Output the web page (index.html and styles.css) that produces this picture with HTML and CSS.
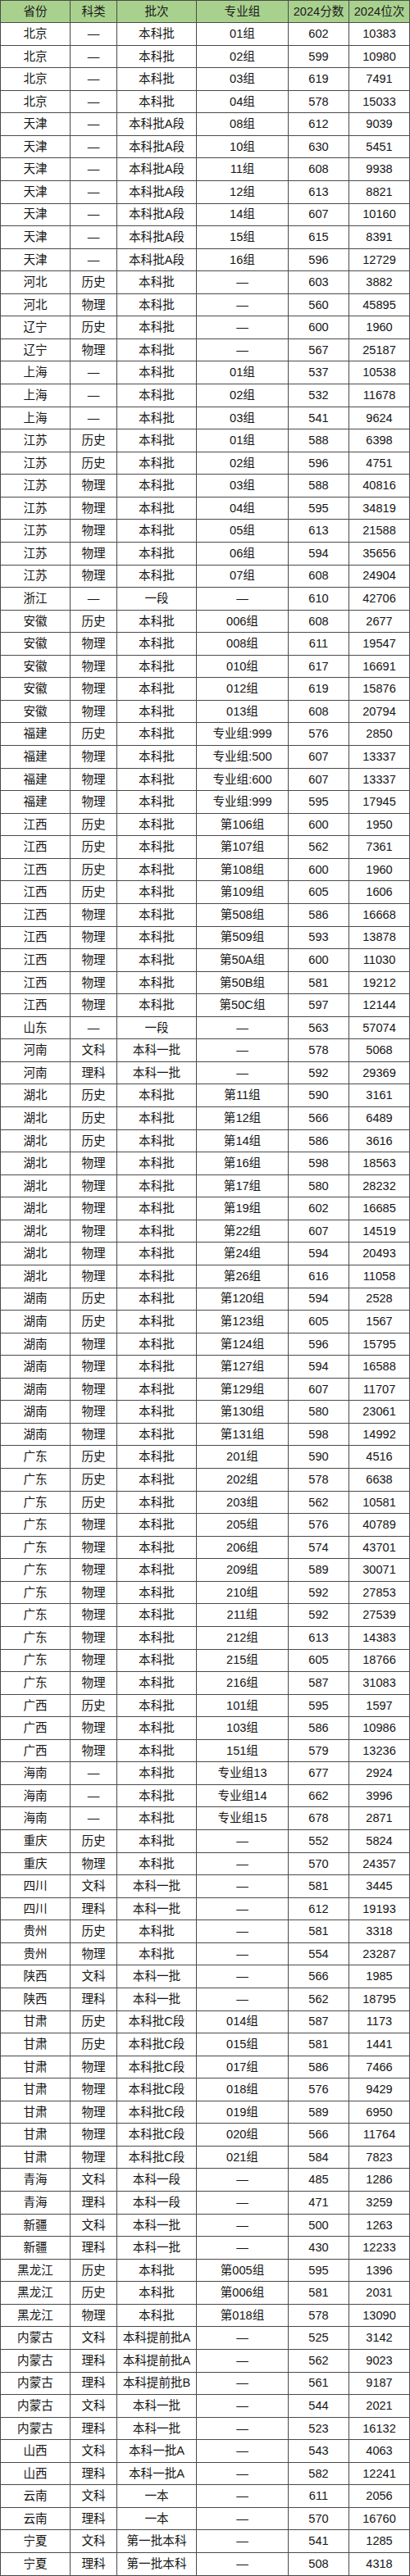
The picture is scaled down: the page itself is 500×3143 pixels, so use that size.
FILE: index.html
```html
<!DOCTYPE html>
<html lang="zh-CN">
<head>
<meta charset="utf-8">
<title>2024 分数线</title>
<link rel="stylesheet" href="styles.css">
</head>
<body>
<table class="scores">
<thead>
<tr><th>省份</th><th>科类</th><th>批次</th><th>专业组</th><th>2024分数</th><th>2024位次</th></tr>
</thead>
<tbody>
<tr><td>北京</td><td>—</td><td>本科批</td><td>01组</td><td>602</td><td>10383</td></tr>
<tr><td>北京</td><td>—</td><td>本科批</td><td>02组</td><td>599</td><td>10980</td></tr>
<tr><td>北京</td><td>—</td><td>本科批</td><td>03组</td><td>619</td><td>7491</td></tr>
<tr><td>北京</td><td>—</td><td>本科批</td><td>04组</td><td>578</td><td>15033</td></tr>
<tr><td>天津</td><td>—</td><td>本科批A段</td><td>08组</td><td>612</td><td>9039</td></tr>
<tr><td>天津</td><td>—</td><td>本科批A段</td><td>10组</td><td>630</td><td>5451</td></tr>
<tr><td>天津</td><td>—</td><td>本科批A段</td><td>11组</td><td>608</td><td>9938</td></tr>
<tr><td>天津</td><td>—</td><td>本科批A段</td><td>12组</td><td>613</td><td>8821</td></tr>
<tr><td>天津</td><td>—</td><td>本科批A段</td><td>14组</td><td>607</td><td>10160</td></tr>
<tr><td>天津</td><td>—</td><td>本科批A段</td><td>15组</td><td>615</td><td>8391</td></tr>
<tr><td>天津</td><td>—</td><td>本科批A段</td><td>16组</td><td>596</td><td>12729</td></tr>
<tr><td>河北</td><td>历史</td><td>本科批</td><td>—</td><td>603</td><td>3882</td></tr>
<tr><td>河北</td><td>物理</td><td>本科批</td><td>—</td><td>560</td><td>45895</td></tr>
<tr><td>辽宁</td><td>历史</td><td>本科批</td><td>—</td><td>600</td><td>1960</td></tr>
<tr><td>辽宁</td><td>物理</td><td>本科批</td><td>—</td><td>567</td><td>25187</td></tr>
<tr><td>上海</td><td>—</td><td>本科批</td><td>01组</td><td>537</td><td>10538</td></tr>
<tr><td>上海</td><td>—</td><td>本科批</td><td>02组</td><td>532</td><td>11678</td></tr>
<tr><td>上海</td><td>—</td><td>本科批</td><td>03组</td><td>541</td><td>9624</td></tr>
<tr><td>江苏</td><td>历史</td><td>本科批</td><td>01组</td><td>588</td><td>6398</td></tr>
<tr><td>江苏</td><td>历史</td><td>本科批</td><td>02组</td><td>596</td><td>4751</td></tr>
<tr><td>江苏</td><td>物理</td><td>本科批</td><td>03组</td><td>588</td><td>40816</td></tr>
<tr><td>江苏</td><td>物理</td><td>本科批</td><td>04组</td><td>595</td><td>34819</td></tr>
<tr><td>江苏</td><td>物理</td><td>本科批</td><td>05组</td><td>613</td><td>21588</td></tr>
<tr><td>江苏</td><td>物理</td><td>本科批</td><td>06组</td><td>594</td><td>35656</td></tr>
<tr><td>江苏</td><td>物理</td><td>本科批</td><td>07组</td><td>608</td><td>24904</td></tr>
<tr><td>浙江</td><td>—</td><td>一段</td><td>—</td><td>610</td><td>42706</td></tr>
<tr><td>安徽</td><td>历史</td><td>本科批</td><td>006组</td><td>608</td><td>2677</td></tr>
<tr><td>安徽</td><td>物理</td><td>本科批</td><td>008组</td><td>611</td><td>19547</td></tr>
<tr><td>安徽</td><td>物理</td><td>本科批</td><td>010组</td><td>617</td><td>16691</td></tr>
<tr><td>安徽</td><td>物理</td><td>本科批</td><td>012组</td><td>619</td><td>15876</td></tr>
<tr><td>安徽</td><td>物理</td><td>本科批</td><td>013组</td><td>608</td><td>20794</td></tr>
<tr><td>福建</td><td>历史</td><td>本科批</td><td>专业组:999</td><td>576</td><td>2850</td></tr>
<tr><td>福建</td><td>物理</td><td>本科批</td><td>专业组:500</td><td>607</td><td>13337</td></tr>
<tr><td>福建</td><td>物理</td><td>本科批</td><td>专业组:600</td><td>607</td><td>13337</td></tr>
<tr><td>福建</td><td>物理</td><td>本科批</td><td>专业组:999</td><td>595</td><td>17945</td></tr>
<tr><td>江西</td><td>历史</td><td>本科批</td><td>第106组</td><td>600</td><td>1950</td></tr>
<tr><td>江西</td><td>历史</td><td>本科批</td><td>第107组</td><td>562</td><td>7361</td></tr>
<tr><td>江西</td><td>历史</td><td>本科批</td><td>第108组</td><td>600</td><td>1960</td></tr>
<tr><td>江西</td><td>历史</td><td>本科批</td><td>第109组</td><td>605</td><td>1606</td></tr>
<tr><td>江西</td><td>物理</td><td>本科批</td><td>第508组</td><td>586</td><td>16668</td></tr>
<tr><td>江西</td><td>物理</td><td>本科批</td><td>第509组</td><td>593</td><td>13878</td></tr>
<tr><td>江西</td><td>物理</td><td>本科批</td><td>第50A组</td><td>600</td><td>11030</td></tr>
<tr><td>江西</td><td>物理</td><td>本科批</td><td>第50B组</td><td>581</td><td>19212</td></tr>
<tr><td>江西</td><td>物理</td><td>本科批</td><td>第50C组</td><td>597</td><td>12144</td></tr>
<tr><td>山东</td><td>—</td><td>一段</td><td>—</td><td>563</td><td>57074</td></tr>
<tr><td>河南</td><td>文科</td><td>本科一批</td><td>—</td><td>578</td><td>5068</td></tr>
<tr><td>河南</td><td>理科</td><td>本科一批</td><td>—</td><td>592</td><td>29369</td></tr>
<tr><td>湖北</td><td>历史</td><td>本科批</td><td>第11组</td><td>590</td><td>3161</td></tr>
<tr><td>湖北</td><td>历史</td><td>本科批</td><td>第12组</td><td>566</td><td>6489</td></tr>
<tr><td>湖北</td><td>历史</td><td>本科批</td><td>第14组</td><td>586</td><td>3616</td></tr>
<tr><td>湖北</td><td>物理</td><td>本科批</td><td>第16组</td><td>598</td><td>18563</td></tr>
<tr><td>湖北</td><td>物理</td><td>本科批</td><td>第17组</td><td>580</td><td>28232</td></tr>
<tr><td>湖北</td><td>物理</td><td>本科批</td><td>第19组</td><td>602</td><td>16685</td></tr>
<tr><td>湖北</td><td>物理</td><td>本科批</td><td>第22组</td><td>607</td><td>14519</td></tr>
<tr><td>湖北</td><td>物理</td><td>本科批</td><td>第24组</td><td>594</td><td>20493</td></tr>
<tr><td>湖北</td><td>物理</td><td>本科批</td><td>第26组</td><td>616</td><td>11058</td></tr>
<tr><td>湖南</td><td>历史</td><td>本科批</td><td>第120组</td><td>594</td><td>2528</td></tr>
<tr><td>湖南</td><td>历史</td><td>本科批</td><td>第123组</td><td>605</td><td>1567</td></tr>
<tr><td>湖南</td><td>物理</td><td>本科批</td><td>第124组</td><td>596</td><td>15795</td></tr>
<tr><td>湖南</td><td>物理</td><td>本科批</td><td>第127组</td><td>594</td><td>16588</td></tr>
<tr><td>湖南</td><td>物理</td><td>本科批</td><td>第129组</td><td>607</td><td>11707</td></tr>
<tr><td>湖南</td><td>物理</td><td>本科批</td><td>第130组</td><td>580</td><td>23061</td></tr>
<tr><td>湖南</td><td>物理</td><td>本科批</td><td>第131组</td><td>598</td><td>14992</td></tr>
<tr><td>广东</td><td>历史</td><td>本科批</td><td>201组</td><td>590</td><td>4516</td></tr>
<tr><td>广东</td><td>历史</td><td>本科批</td><td>202组</td><td>578</td><td>6638</td></tr>
<tr><td>广东</td><td>历史</td><td>本科批</td><td>203组</td><td>562</td><td>10581</td></tr>
<tr><td>广东</td><td>物理</td><td>本科批</td><td>205组</td><td>576</td><td>40789</td></tr>
<tr><td>广东</td><td>物理</td><td>本科批</td><td>206组</td><td>574</td><td>43701</td></tr>
<tr><td>广东</td><td>物理</td><td>本科批</td><td>209组</td><td>589</td><td>30071</td></tr>
<tr><td>广东</td><td>物理</td><td>本科批</td><td>210组</td><td>592</td><td>27853</td></tr>
<tr><td>广东</td><td>物理</td><td>本科批</td><td>211组</td><td>592</td><td>27539</td></tr>
<tr><td>广东</td><td>物理</td><td>本科批</td><td>212组</td><td>613</td><td>14383</td></tr>
<tr><td>广东</td><td>物理</td><td>本科批</td><td>215组</td><td>605</td><td>18766</td></tr>
<tr><td>广东</td><td>物理</td><td>本科批</td><td>216组</td><td>587</td><td>31083</td></tr>
<tr><td>广西</td><td>历史</td><td>本科批</td><td>101组</td><td>595</td><td>1597</td></tr>
<tr><td>广西</td><td>物理</td><td>本科批</td><td>103组</td><td>586</td><td>10986</td></tr>
<tr><td>广西</td><td>物理</td><td>本科批</td><td>151组</td><td>579</td><td>13236</td></tr>
<tr><td>海南</td><td>—</td><td>本科批</td><td>专业组13</td><td>677</td><td>2924</td></tr>
<tr><td>海南</td><td>—</td><td>本科批</td><td>专业组14</td><td>662</td><td>3996</td></tr>
<tr><td>海南</td><td>—</td><td>本科批</td><td>专业组15</td><td>678</td><td>2871</td></tr>
<tr><td>重庆</td><td>历史</td><td>本科批</td><td>—</td><td>552</td><td>5824</td></tr>
<tr><td>重庆</td><td>物理</td><td>本科批</td><td>—</td><td>570</td><td>24357</td></tr>
<tr><td>四川</td><td>文科</td><td>本科一批</td><td>—</td><td>581</td><td>3445</td></tr>
<tr><td>四川</td><td>理科</td><td>本科一批</td><td>—</td><td>612</td><td>19193</td></tr>
<tr><td>贵州</td><td>历史</td><td>本科批</td><td>—</td><td>581</td><td>3318</td></tr>
<tr><td>贵州</td><td>物理</td><td>本科批</td><td>—</td><td>554</td><td>23287</td></tr>
<tr><td>陕西</td><td>文科</td><td>本科一批</td><td>—</td><td>566</td><td>1985</td></tr>
<tr><td>陕西</td><td>理科</td><td>本科一批</td><td>—</td><td>562</td><td>18795</td></tr>
<tr><td>甘肃</td><td>历史</td><td>本科批C段</td><td>014组</td><td>587</td><td>1173</td></tr>
<tr><td>甘肃</td><td>历史</td><td>本科批C段</td><td>015组</td><td>581</td><td>1441</td></tr>
<tr><td>甘肃</td><td>物理</td><td>本科批C段</td><td>017组</td><td>586</td><td>7466</td></tr>
<tr><td>甘肃</td><td>物理</td><td>本科批C段</td><td>018组</td><td>576</td><td>9429</td></tr>
<tr><td>甘肃</td><td>物理</td><td>本科批C段</td><td>019组</td><td>589</td><td>6950</td></tr>
<tr><td>甘肃</td><td>物理</td><td>本科批C段</td><td>020组</td><td>566</td><td>11764</td></tr>
<tr><td>甘肃</td><td>物理</td><td>本科批C段</td><td>021组</td><td>584</td><td>7823</td></tr>
<tr><td>青海</td><td>文科</td><td>本科一段</td><td>—</td><td>485</td><td>1286</td></tr>
<tr><td>青海</td><td>理科</td><td>本科一段</td><td>—</td><td>471</td><td>3259</td></tr>
<tr><td>新疆</td><td>文科</td><td>本科一批</td><td>—</td><td>500</td><td>1263</td></tr>
<tr><td>新疆</td><td>理科</td><td>本科一批</td><td>—</td><td>430</td><td>12233</td></tr>
<tr><td>黑龙江</td><td>历史</td><td>本科批</td><td>第005组</td><td>595</td><td>1396</td></tr>
<tr><td>黑龙江</td><td>历史</td><td>本科批</td><td>第006组</td><td>581</td><td>2031</td></tr>
<tr><td>黑龙江</td><td>物理</td><td>本科批</td><td>第018组</td><td>578</td><td>13090</td></tr>
<tr><td>内蒙古</td><td>文科</td><td>本科提前批A</td><td>—</td><td>525</td><td>3142</td></tr>
<tr><td>内蒙古</td><td>理科</td><td>本科提前批A</td><td>—</td><td>562</td><td>9023</td></tr>
<tr><td>内蒙古</td><td>理科</td><td>本科提前批B</td><td>—</td><td>561</td><td>9187</td></tr>
<tr><td>内蒙古</td><td>文科</td><td>本科一批</td><td>—</td><td>544</td><td>2021</td></tr>
<tr><td>内蒙古</td><td>理科</td><td>本科一批</td><td>—</td><td>523</td><td>16132</td></tr>
<tr><td>山西</td><td>文科</td><td>本科一批A</td><td>—</td><td>543</td><td>4063</td></tr>
<tr><td>山西</td><td>理科</td><td>本科一批A</td><td>—</td><td>582</td><td>12241</td></tr>
<tr><td>云南</td><td>文科</td><td>一本</td><td>—</td><td>611</td><td>2056</td></tr>
<tr><td>云南</td><td>理科</td><td>一本</td><td>—</td><td>570</td><td>16760</td></tr>
<tr><td>宁夏</td><td>文科</td><td>第一批本科</td><td>—</td><td>541</td><td>1285</td></tr>
<tr><td>宁夏</td><td>理科</td><td>第一批本科</td><td>—</td><td>508</td><td>4318</td></tr>
</tbody>
</table>
</body>
</html>
```

FILE: styles.css
```css
html, body {
  margin: 0;
  padding: 0;
  background: #ffffff;
}

body {
  font-family: "Liberation Sans", "Noto Sans CJK SC", sans-serif;
  font-size: 14.6px;
  color: #141414;
}

.scores {
  display: block;
  box-sizing: border-box;
  width: 500px;
  border-collapse: separate;
  border-spacing: 0;
  border-top: 1px solid #4a4a4a;
  border-left: 1px solid #4a4a4a;
}

.scores thead,
.scores tbody {
  display: block;
}

.scores tr {
  display: grid;
  grid-template-columns: 85px 57px 97px 112px 74px 1fr;
  height: 27.566px;
}

.scores thead tr {
  height: 27px;
  background: #a9d18e;
}

.scores th,
.scores td {
  display: flex;
  align-items: center;
  justify-content: center;
  box-sizing: border-box;
  padding: 0;
  border-right: 1px solid #4a4a4a;
  border-bottom: 1px solid #4a4a4a;
  white-space: nowrap;
  line-height: 1;
}

.scores th {
  font-weight: normal;
  color: #1a1a1a;
}
```
